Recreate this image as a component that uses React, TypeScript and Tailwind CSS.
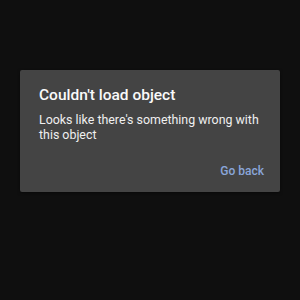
export default function App() {
  return (
    <div className="w-[300px] h-[300px] bg-[#0f0f0f] pt-[70px] px-[20px]" style={{ fontFamily: 'Roboto, "Liberation Sans", sans-serif' }}>
      <div className="h-[122px] bg-[#444444] rounded-[2px] pl-[19px] pr-[8px] pt-[15px] flex flex-col shadow-[0_1px_3px_rgba(0,0,0,0.5)]">
        <div className="text-[15.5px] leading-[20px] font-medium text-[#fafafa]">Couldn't load object</div>
        <div className="mt-[7px] text-[12.4px] leading-[15px] text-[#f0f0f0]">Looks like there's something wrong with this object</div>
        <div className="mt-auto mb-[13px] pr-[8px] flex justify-end">
          <span className="text-[12px] leading-[16px] font-medium text-[#8aa6da]">Go back</span>
        </div>
      </div>
    </div>
  );
}
